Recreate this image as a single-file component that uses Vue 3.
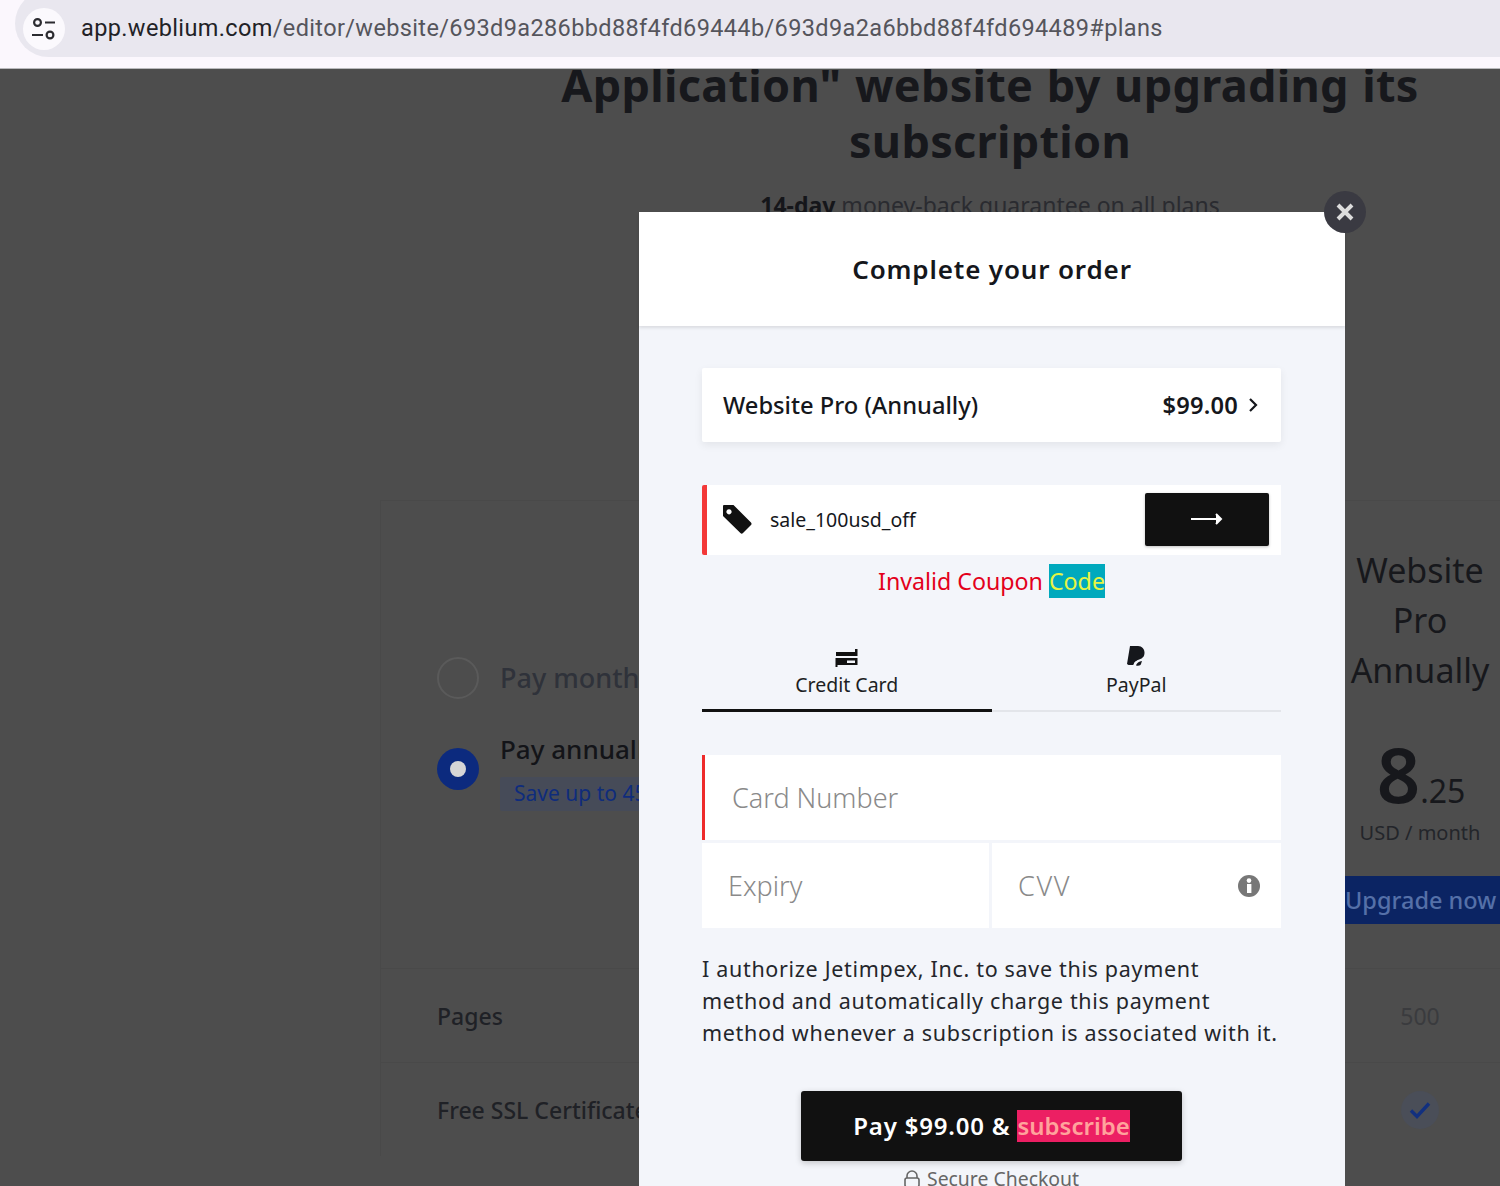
<script setup>
// 结账弹窗，背后是变暗的套餐页
const urlHost = "app.weblium.com";
const urlPath = "/editor/website/693d9a286bbd88f4fd69444b/693d9a2a6bbd88f4fd694489#plans";

const terms = [
  "I authorize Jetimpex, Inc. to save this payment",
  "method and automatically charge this payment",
  "method whenever a subscription is associated with it.",
];
</script>

<template>
  <div class="screen">
    <header class="topbar">
      <div class="pill">
        <span class="tune">
          <svg width="26" height="26" viewBox="0 0 26 26" fill="none" stroke="#2b2b30" stroke-width="2.2">
            <circle cx="6.5" cy="6.5" r="3.4" />
            <path d="M14 6.5h10M1 19h11" />
            <circle cx="19" cy="19" r="3.4" />
          </svg>
        </span>
        <span class="url"><b>{{ urlHost }}</b>{{ urlPath }}</span>
      </div>
    </header>

    <main class="page">
      <div class="hero">
        <h1>Application" website by upgrading its<br />subscription</h1>
        <p><b>14-day</b> money-back guarantee on all plans</p>
      </div>

      <section class="plans">
        <div class="plan-top">
          <div class="billing">
            <div class="option">
              <span class="radio"></span>
              <span class="opt-label muted">Pay monthly</span>
            </div>
            <div class="option on">
              <span class="radio active"></span>
              <div>
                <div class="opt-label">Pay annually</div>
                <span class="save">Save up to 45%</span>
              </div>
            </div>
          </div>
          <div class="plan-col">
            <div class="plan-name">Website<br />Pro<br />Annually</div>
            <div class="price"><b>8</b><span>.25</span></div>
            <div class="per">USD / month</div>
            <div class="upgrade">Upgrade now</div>
          </div>
        </div>
        <div class="row">
          <span>Pages</span>
          <span class="cell">500</span>
        </div>
        <div class="row">
          <span>Free SSL Certificate</span>
          <span class="cell">
            <span class="check">
              <svg width="22" height="18" viewBox="0 0 22 18" fill="none" stroke="#12307f" stroke-width="3.4">
                <path d="M2 9.5l6 6L20 2.5" />
              </svg>
            </span>
          </span>
        </div>
      </section>

      <div class="modal">
        <button class="close">
          <svg width="18" height="18" viewBox="0 0 18 18" stroke="#dcdcdc" stroke-width="4">
            <path d="M2 2l14 14M16 2L2 16" />
          </svg>
        </button>
        <div class="modal-head">Complete your order</div>
        <div class="modal-body">
          <div class="summary">
            <span>Website Pro (Annually)</span>
            <span class="sum-right">
              $99.00
              <svg width="10" height="16" viewBox="0 0 10 16" fill="none" stroke="#15171c" stroke-width="2.2">
                <path d="M2 2l6 6-6 6" />
              </svg>
            </span>
          </div>

          <div class="coupon">
            <svg class="tag" width="30" height="29" viewBox="0 0 30 29">
              <path fill-rule="evenodd" fill="#111" d="M2 0h9.5L29 17.5a2 2 0 0 1 0 2.6l-8 8a2 2 0 0 1-2.6 0L1 11V1a1 1 0 0 1 1-1zM7 4.2a2.6 2.6 0 1 0 .01 0z" />
            </svg>
            <span class="code">sale_100usd_off</span>
            <span class="apply">
              <svg width="32" height="12" viewBox="0 0 32 12" fill="none" stroke="#fff" stroke-width="2">
                <path d="M0 6h30" />
                <path d="M25 1l5 5-5 5" fill="#fff" />
              </svg>
            </span>
          </div>
          <div class="invalid">Invalid Coupon <mark>Code</mark></div>

          <div class="tabs">
            <div class="tab active">
              <span class="tab-icon">
                <svg width="23" height="18" viewBox="0 0 23 18" fill="#111">
                  <path d="M1 3h19V0h2.500v7H1z" />
                  <path d="M.5 9h22v7h-20v2h-2zM12 11.500V14h8v-2.500z" fill-rule="evenodd" />
                </svg>
              </span>
              <span>Credit Card</span>
            </div>
            <div class="tab">
              <span class="tab-icon">
                <svg width="18" height="21" viewBox="0 0 18 21">
                  <path fill="#15171c" d="M3 0h8c4 0 6.500 3 6.500 6.500 0 4-2 7-6 8-3 .5-4.500 1.500-5 4.500H1.500L0 18z" />
                  <path fill="none" stroke="#f3f5fa" stroke-width="1.7" d="M7 20c1-4 3-5 6-6 2-.5 3.500-1.500 4-3" />
                  <path fill="#15171c" d="M9 19.500c.5-2 1.500-3 4-4l2-.5-1 3c-.5 1.500-2 2-5 1.500z" />
                </svg>
              </span>
              <span>PayPal</span>
            </div>
          </div>

          <div class="field number">Card Number</div>
          <div class="field-row">
            <div class="field small expiry">Expiry</div>
            <div class="field small cvv">
              CVV
              <svg width="22" height="22" viewBox="0 0 22 22">
                <circle cx="11" cy="11" r="11" fill="#777" />
                <rect x="9" y="9" width="4.4" height="9" fill="#fff" />
                <circle cx="11" cy="5.6" r="2.3" fill="#fff" />
              </svg>
            </div>
          </div>

          <p class="terms">
            <span v-for="line in terms" :key="line">{{ line }}</span>
          </p>

          <button class="pay">Pay $99.00 &amp; <mark>subscribe</mark></button>
          <div class="secure">
            <svg width="16" height="18" viewBox="0 0 16 18" fill="none" stroke="#666" stroke-width="1.6">
              <path d="M3 8V6a5 5 0 0 1 10 0v2" />
              <rect x="1" y="8" width="14" height="9" rx="2" />
            </svg>
            Secure Checkout
          </div>
        </div>
      </div>
    </main>
  </div>
</template>

<style>
html, body { margin: 0; overflow: hidden; }
</style>

<style scoped>
.screen { width: 1500px; height: 1186px; overflow: hidden; font-family: "Noto Sans", "Liberation Sans", sans-serif; background: #4d4d4d; }

.topbar { height: 69px; box-sizing: border-box; padding-left: 15px; background: #fbf7fd; border-bottom: 1px solid #b9b9bc; overflow: hidden; }
.pill { height: 67px; margin-top: -10px; display: flex; align-items: center; padding-top: 10px; box-sizing: border-box; padding-left: 8px; background: #e9e7ef; border-radius: 34px 0 0 34px; }
.tune { width: 42px; height: 42px; border-radius: 50%; background: #fbf9fd; display: flex; align-items: center; justify-content: center; flex: none; }
.url { margin: 0 0 2px 16px; font-family: Roboto, sans-serif; font-size: 23.5px; letter-spacing: 0.37px; color: #55555c; white-space: nowrap; }
.url b { font-weight: 400; color: #222226; }

.page { position: relative; height: 1117px; overflow: hidden; background: #4d4d4d; }
.hero { margin-top: -12px; padding-left: 480px; text-align: center; color: #17181c; }
.hero h1 { margin: 0; font-size: 45px; line-height: 56px; font-weight: 700; letter-spacing: 0.3px; word-spacing: 1.5px; white-space: nowrap; }
.hero p { margin: 20px 0 0; font-size: 23px; line-height: 32px; color: #2a2b30; }
.hero p b { color: #15161a; }

.plans { margin: 279px 0 0 380px; border-left: 1px solid #494949; border-top: 1px solid #494949; }
.plan-top { display: flex; justify-content: space-between; height: 467px; box-sizing: border-box; padding-left: 56px; }
.billing { display: flex; flex-direction: column; gap: 30px; padding-top: 156px; }
.option { display: flex; align-items: center; gap: 21px; }
.option.on { align-items: flex-start; }
.radio { width: 38px; height: 38px; border: 2px solid #5a5a5a; border-radius: 50%; flex: none; }
.radio.active { position: relative; margin-top: 19px; width: 42px; height: 42px; border: 0; background: #0c2a7e; }
.radio.active::after { content: ""; position: absolute; left: 13px; top: 13px; width: 16px; height: 16px; border-radius: 50%; background: #d6d6d6; }
.opt-label { font-size: 26px; line-height: 40px; font-weight: 500; color: #131418; white-space: nowrap; }
.opt-label.muted { font-size: 27px; color: #2f323a; }
.save { display: inline-block; margin-top: 8px; padding: 0 14px; height: 34px; line-height: 32px; font-size: 21px; color: #0f2c7c; background: #464b58; border-radius: 2px; white-space: nowrap; }

.plan-col { width: 155px; text-align: center; padding-top: 44px; color: #17181c; }
.plan-name { padding-right: 5px; font-size: 34px; line-height: 50px; white-space: nowrap; }
.price { padding-right: 3px; margin-top: 42px; height: 74px; line-height: 74px; white-space: nowrap; }
.price b { font-size: 76px; font-weight: 600; }
.price span { font-size: 32px; }
.per { padding-right: 5px; margin-top: 7px; font-size: 20px; line-height: 30px; color: #23252a; white-space: nowrap; }
.upgrade { margin-top: 28px; padding-right: 4px; height: 48px; line-height: 48px; background: #0b2463; color: #5570a8; font-size: 23.5px; font-weight: 500; white-space: nowrap; }

.row { display: flex; justify-content: space-between; align-items: center; height: 93px; box-sizing: content-box; padding-left: 56px; border-top: 1px solid #494949; font-size: 23px; font-weight: 500; color: #1f2126; }
.cell { width: 155px; box-sizing: border-box; padding-right: 5px; display: flex; justify-content: center; font-weight: 400; color: #3a3b3e; }
.check { width: 38px; height: 38px; border-radius: 50%; background: #4a4e58; display: flex; align-items: center; justify-content: center; }

.modal { position: absolute; left: 639px; top: 143px; width: 706px; background: #f3f5fa; }
.close { position: absolute; right: -21px; top: -21px; width: 42px; height: 42px; padding: 0; border: 0; border-radius: 50%; background: #3a3a42; display: flex; align-items: center; justify-content: center; }
.modal-head { height: 114px; box-sizing: border-box; padding-top: 37px; text-align: center; background: #fff; font-size: 26px; line-height: 40px; font-weight: 600; letter-spacing: 0.85px; color: #15171c; box-shadow: 0 2px 3px rgba(0, 0, 0, 0.1); }
.modal-body { padding: 42px 64px 0 63px; }

.summary { height: 74px; box-sizing: border-box; padding: 0 23px 1px 21px; display: flex; align-items: center; justify-content: space-between; background: #fff; font-size: 23.7px; font-weight: 500; color: #15171c; box-shadow: 0 3px 8px rgba(0, 0, 0, 0.07); border-radius: 2px; }
.sum-right { display: flex; align-items: center; gap: 10px; font-weight: 600; letter-spacing: 0.2px; }

.coupon { margin-top: 43px; height: 70px; box-sizing: border-box; display: flex; align-items: center; padding: 0 12px 2px 15px; background: #fff; border-left: 5px solid #f33838; border-radius: 2px 0 0 2px; }
.code { margin-left: 18px; font-size: 19.5px; color: #15171c; }
.apply { margin-left: auto; width: 124px; height: 53px; background: #111; border-radius: 2px; display: flex; align-items: center; justify-content: center; box-shadow: 0 1px 3px rgba(0, 0, 0, 0.25); }

.invalid { margin-top: 9px; height: 34px; line-height: 34px; text-align: center; font-size: 23.2px; color: #e3001b; }
.invalid mark { display: inline-block; background: #00a9bd; color: #e7f542; height: 34px; }

.tabs { display: flex; margin-top: 47px; }
.tab { flex: 1; height: 67px; box-sizing: border-box; display: flex; flex-direction: column; align-items: center; border-bottom: 2px solid #e3e5ea; font-size: 19.5px; line-height: 28px; color: #1c1e23; }
.tab-icon { height: 22px; display: flex; align-items: flex-end; }
.tab span + span { margin-top: 4px; }
.tab.active { border-bottom: 3px solid #111; }

.field { background: #fff; color: #8a8a8a; font-weight: 300; }
.number { margin-top: 43px; height: 85px; box-sizing: border-box; padding-left: 27px; line-height: 85px; font-size: 27px; border-left: 3px solid #ee2a2a; }
.field-row { display: flex; gap: 3px; margin-top: 3px; }
.small { height: 85px; box-sizing: border-box; padding-left: 26px; display: flex; align-items: center; font-size: 27px; }
.expiry { width: 287px; flex: none; }
.cvv { flex: 1; justify-content: space-between; padding-right: 21px; letter-spacing: 1.6px; }

.terms { margin: 25px 0 0; font-size: 21.5px; line-height: 32px; color: #24262b; letter-spacing: 0.68px; }
.terms span { display: block; white-space: nowrap; }

.pay { display: block; margin: 42px auto 0; width: 381px; height: 70px; padding: 0 0 2px; border: 0; border-radius: 3px; background: #111; color: #fff; font-family: inherit; font-size: 24px; font-weight: 600; letter-spacing: 0.8px; box-shadow: 0 2px 6px rgba(0, 0, 0, 0.2); }
.pay mark { display: inline-block; background: #ec1f63; color: #ffa39c; height: 32px; line-height: 32px; letter-spacing: 0; }

.secure { margin-top: 4px; display: flex; align-items: center; justify-content: center; gap: 7px; font-size: 19.4px; line-height: 28px; color: #666; }
</style>
